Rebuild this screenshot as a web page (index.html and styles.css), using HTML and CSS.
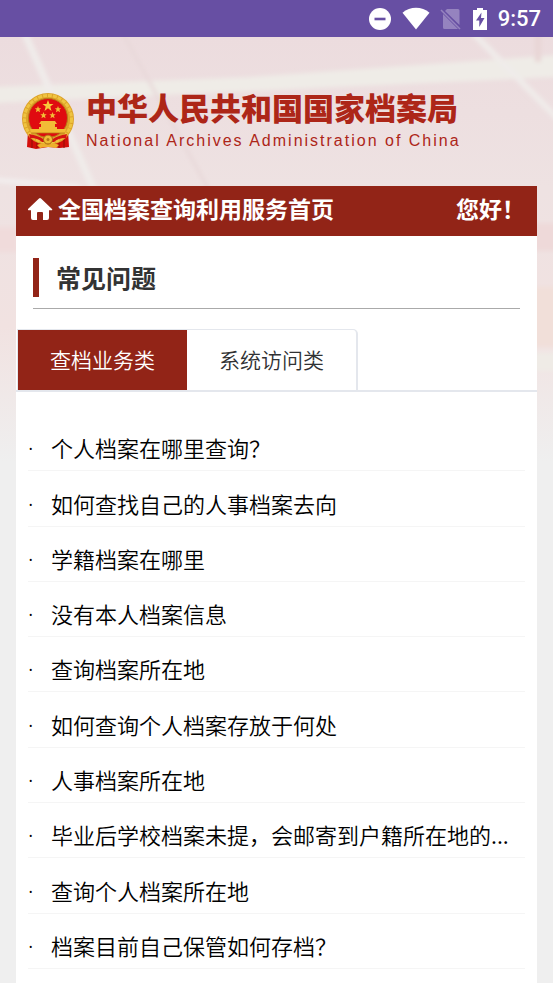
FILE: index.html
```
<!DOCTYPE html>
<html lang="zh-CN">
<head>
  <meta charset="UTF-8">
  <meta name="viewport" content="width=device-width, initial-scale=1.0">
  <title>全国档案查询利用服务</title>
  <link rel="stylesheet" href="styles.css">
</head>
<body>
  <div class="status-bar">
    <svg width="24" height="24" viewBox="0 0 24 24"><circle cx="12" cy="12" r="11" fill="#fff"/><path d="M6.5 12h11" stroke="#674fa3" stroke-width="2.6"/></svg>
    <svg width="28" height="24" viewBox="0 0 28 24"><path d="M.5 5.800C8-.8 20-.8 27.500 5.800L14 22.500z" fill="#fff"/></svg>
    <svg width="22" height="24" viewBox="0 0 22 24"><path d="M7 2h11q1.500 0 1.500 1.500v14.500L5 4zM3 7v13.500q0 1.500 1.500 1.500h13.500z" fill="#9583bf"/><path d="M1 3l19 19" stroke="#9583bf" stroke-width="1.600"/></svg>
    <svg width="16" height="24" viewBox="0 0 16 24"><path d="M5 1h6v2h4v20H1V3h4z" fill="#fff"/><path d="M9.500 5.500L4 13.500h3.300v6.500L12.500 11H9z" fill="#674fa3"/></svg>
    <span class="clock">9:57</span>
  </div>

  <div class="page">
    <svg class="page-bg" viewBox="0 0 553 500" preserveAspectRatio="none" aria-hidden="true">
      <defs>
        <linearGradient id="fade" x1="0" y1="0" x2="0" y2="1">
          <stop offset="0" stop-color="#ecdcde"/>
          <stop offset=".3" stop-color="#eee2e2"/>
          <stop offset=".58" stop-color="#f1e2e1"/>
          <stop offset=".85" stop-color="#efefef"/>
        </linearGradient>
        <filter id="soft"><feGaussianBlur stdDeviation="2"/></filter>
      </defs>
      <path d="M0 0h553v500H0z" fill="url(#fade)"/>
      <g filter="url(#soft)">
        <path d="M-5 50L250 40 558 18v22L250 54-5 66z" fill="#efece7"/>
        <path d="M24-5L95 155" stroke="#f0ecea" stroke-width="7"/>
        <path d="M122-5L210 155" stroke="#e8d8d9" stroke-width="3"/>
        <path d="M472-5L560 84" stroke="#f0ecea" stroke-width="6"/>
        <path d="M538-5v30" stroke="#e8d5d5" stroke-width="6"/>
        <path d="M-5 143L80 150" stroke="#f2eeee" stroke-width="5"/>
        <path d="M533 186h25v28h-25z" fill="#eed9d9"/>
        <path d="M533 250h25v60h-25z" fill="#f1dfd9"/>
        <path d="M533 316h25v18h-25z" fill="#efebe6"/>
        <path d="M-5 190h23v25H-5z" fill="#f0dbdb"/>
      </g>
    </svg>

    <header class="site-header">
      <svg width="54" height="58" viewBox="0 0 54 58">
        <path d="M7 39h40l1 16-9 1-12-1-12 2-9-2z" fill="#d40f0c"/>
        <path d="M11 44v12M16 48v8M38 48v8M43 44v12" stroke="#8f1007" stroke-width="1"/>
        <circle cx="27" cy="27" r="26" fill="#dda229"/>
        <circle cx="27" cy="27" r="23.500" fill="none" stroke="#efc440" stroke-width="3" stroke-dasharray="4 1"/>
        <circle cx="27" cy="26" r="19.500" fill="#e00b10" stroke="#b87918"/>
        <path d="M27 8l1.500 4h4l-3.200 2.600 1.200 4.400-3.500-2.700-3.500 2.700 1.200-4.400-3.200-2.600h4z" fill="#f8ca3c"/>
        <g fill="#f2bc36">
          <path d="M17 14l.9 2.200 2.300.1-1.800 1.500.7 2.400-2.100-1.300-2.100 1.300.7-2.400-1.800-1.500 2.300-.1zM37 14l.9 2.200 2.300.1-1.800 1.500.7 2.400-2.100-1.300-2.100 1.300.7-2.400-1.800-1.500 2.300-.1zM22.500 20l.9 2.200 2.300.1-1.800 1.500.7 2.400-2.100-1.300-2.100 1.300.7-2.400-1.800-1.500 2.300-.1zM31.500 20l.9 2.200 2.300.1-1.800 1.500.7 2.400-2.100-1.300-2.100 1.300.7-2.400-1.800-1.500 2.300-.1z"/>
          <path d="M20 29h14l2 3H18zM20 32h14v3h2v2h9l-1 4H10l-1-4h9v-2h2z"/>
        </g>
        <path d="M10 41h34" stroke="#b87918" stroke-width=".8"/>
        <path d="M8 42q10 2 14 5h10q4-3 14-5l-1 4q-8 0-12 4H21q-4-4-12-4z" fill="#d51312"/>
        <circle cx="27" cy="47.500" r="4.500" fill="#f0bc37" stroke="#a96612"/>
        <circle cx="27" cy="47.500" r="1.500" fill="#b87918"/>
        <path d="M16 53q5-3 11 0 6-3 11 0l-3 3q-8-2-16 0z" fill="#edb02d"/>
      </svg>
      <div class="site-name">
        <div class="name-cn">中华人民共和国国家档案局</div>
        <div class="name-en">National Archives Administration of China</div>
      </div>
    </header>

    <main class="content">
      <nav class="nav-bar">
        <a class="home-link" href="#">
          <svg width="26" height="26" viewBox="1 -2 26 26"><path d="M12 1.500q1-.9 2 0L25 12q.7 1-.5 1.300H22V21q0 2-2 2h-4v-7q0-1-1-1h-4q-1 0-1 1v7H6q-2 0-2-2v-7.700H1.500Q.3 13 1 12z" fill="#fff"/></svg>
          <span>全国档案查询利用服务首页</span>
        </a>
        <span>您好！</span>
      </nav>

      <div class="section-head">
        <h1 class="section-title">常见问题</h1>
      </div>

      <div class="tabs" role="tablist">
        <button class="tab active" type="button" role="tab" aria-selected="true">查档业务类</button>
        <button class="tab" type="button" role="tab" aria-selected="false">系统访问类</button>
      </div>

      <ul class="question-list">
        <li><a href="#">个人档案在哪里查询？</a></li>
        <li><a href="#">如何查找自己的人事档案去向</a></li>
        <li><a href="#">学籍档案在哪里</a></li>
        <li><a href="#">没有本人档案信息</a></li>
        <li><a href="#">查询档案所在地</a></li>
        <li><a href="#">如何查询个人档案存放于何处</a></li>
        <li><a href="#">人事档案所在地</a></li>
        <li><a href="#">毕业后学校档案未提，会邮寄到户籍所在地的...</a></li>
        <li><a href="#">查询个人档案所在地</a></li>
        <li><a href="#">档案目前自己保管如何存档？</a></li>
      </ul>
    </main>
  </div>
</body>
</html>
```
FILE: styles.css
```
* {
  box-sizing: border-box;
}
body {
  margin: 0;
  min-height: 100vh;
  display: flex;
  flex-direction: column;
  background: #efefef;
  font-family: "Noto Sans CJK SC", sans-serif;
}
a {
  color: inherit;
  text-decoration: none;
}
svg {
  flex-shrink: 0;
}
.status-bar {
  display: flex;
  align-items: center;
  justify-content: flex-end;
  height: 37px;
  padding: 0 12px;
  gap: 10px;
  background: #674fa3;
  color: #fff;
}
.clock {
  font: 500 22px/24px Roboto, sans-serif;
}
.page {
  position: relative;
  flex: 1;
  display: flex;
  flex-direction: column;
  padding: 0 16px;
}
/* blurred photo behind the header, fades out to grey */
.page-bg {
  position: absolute;
  top: 0;
  left: 0;
  width: 100%;
  height: 500px;
  z-index: -1;
}
.site-header {
  display: flex;
  align-items: center;
  gap: 11px;
  height: 149px;
  padding: 18px 5px 0;
  color: #ad2618;
}
.site-name {
  display: flex;
  flex-direction: column;
  gap: 5px;
}
.name-cn {
  font-size: 31px;
  font-weight: 900;
  line-height: 36px;
  white-space: nowrap;
}
.name-en {
  font: 16px/22px "Liberation Sans", sans-serif;
  letter-spacing: 2px;
  white-space: nowrap;
}
.content {
  flex: 1;
  background: #fff;
}
.nav-bar {
  display: flex;
  align-items: center;
  justify-content: space-between;
  height: 50px;
  padding: 0 12px 6px;
  background: #922417;
  color: #fff;
  font-size: 23px;
  font-weight: 700;
  line-height: 44px;
}
.home-link {
  display: flex;
  align-items: center;
  gap: 4px;
}
.section-head {
  margin: 0 17px;
  padding: 22px 0 11px;
  border-bottom: 1px solid #aaa;
}
.section-title {
  margin: 0;
  padding: 0 0 1px 17px;
  border-left: 6px solid #922417;
  color: #333;
  font-size: 25px;
  font-weight: 700;
  line-height: 38px;
}
.tabs {
  display: flex;
  margin-top: 20px;
  padding-left: 1px;
  border-bottom: 2px solid #e4e7ed;
}
.tab {
  height: 61px;
  padding: 0 32px 2px;
  border: 1px solid #e4e7ed;
  border-width: 1px 2px 0 0;
  border-radius: 0 5px 0 0;
  background: #fff;
  color: #303133;
  font: 350 21px/58px "Noto Sans CJK SC", sans-serif;
}
.tab.active {
  border-width: 1px 0 0 1px;
  border-radius: 0;
  background: #922417;
  background-clip: padding-box;
  color: #fff;
}
.question-list {
  display: grid;
  grid-auto-rows: 1fr;
  min-height: 553px;
  margin: 24px 12px 0;
  padding: 0;
  list-style: none;
  color: #000;
  font-size: 22px;
  font-weight: 350;
  line-height: 38px;
}
.question-list li {
  display: flex;
  align-items: flex-end;
  padding-bottom: 4px;
  border-bottom: 1px solid #f5f5f5;
}
.question-list li::before {
  content: "·";
  width: 23px;
  flex-shrink: 0;
  font-family: "Noto Sans", sans-serif;
}
.question-list a {
  overflow: hidden;
  text-overflow: ellipsis;
  white-space: nowrap;
}
```
